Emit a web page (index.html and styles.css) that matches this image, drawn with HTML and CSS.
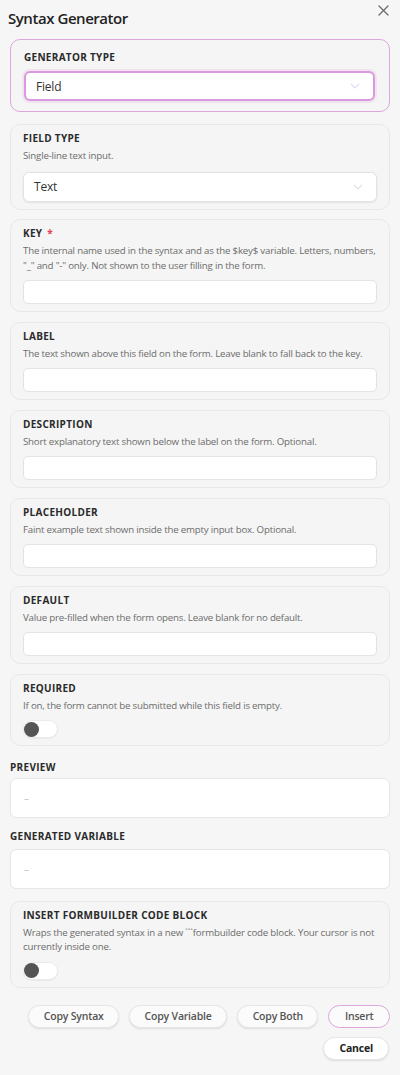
FILE: index.html
```html
<!DOCTYPE html>
<html lang="en">
<head>
<meta charset="utf-8">
<title>Syntax Generator</title>
<link rel="stylesheet" href="styles.css">
</head>
<body>
<div class="modal">
  <div class="header">
    <h1 class="title">Syntax Generator</h1>
    <button class="close" aria-label="Close">
      <svg width="11" height="11" viewBox="0 0 11 11"><path d="M1 1L10 10M10 1L1 10" stroke="#6b6b6b" stroke-width="1.3" fill="none" stroke-linecap="round"/></svg>
    </button>
  </div>

  <div class="card card-accent">
    <div class="card-title">GENERATOR TYPE</div>
    <div class="select select-accent">
      <span>Field</span>
      <svg class="chev" width="10" height="6" viewBox="0 0 10 6"><path d="M1 1l4 4 4-4" stroke="#e4daf0" stroke-width="1.1" fill="none"/></svg>
    </div>
  </div>

  <div class="card">
    <div class="card-title">FIELD TYPE</div>
    <div class="card-desc">Single-line text input.</div>
    <div class="select">
      <span>Text</span>
      <svg class="chev" width="10" height="6" viewBox="0 0 10 6"><path d="M1 1l4 4 4-4" stroke="#e0e0e0" stroke-width="1.1" fill="none"/></svg>
    </div>
  </div>

  <div class="card">
    <div class="card-title">KEY <span class="req">*</span></div>
    <div class="card-desc">The internal name used in the syntax and as the $key$ variable. Letters, numbers, "_" and "-" only. Not shown to the user filling in the form.</div>
    <div class="input"></div>
  </div>

  <div class="card">
    <div class="card-title">LABEL</div>
    <div class="card-desc">The text shown above this field on the form. Leave blank to fall back to the key.</div>
    <div class="input"></div>
  </div>

  <div class="card">
    <div class="card-title">DESCRIPTION</div>
    <div class="card-desc">Short explanatory text shown below the label on the form. Optional.</div>
    <div class="input"></div>
  </div>

  <div class="card">
    <div class="card-title">PLACEHOLDER</div>
    <div class="card-desc">Faint example text shown inside the empty input box. Optional.</div>
    <div class="input"></div>
  </div>

  <div class="card">
    <div class="card-title">DEFAULT</div>
    <div class="card-desc">Value pre-filled when the form opens. Leave blank for no default.</div>
    <div class="input"></div>
  </div>

  <div class="card">
    <div class="card-title">REQUIRED</div>
    <div class="card-desc">If on, the form cannot be submitted while this field is empty.</div>
    <div class="toggle"><span class="knob"></span></div>
  </div>

  <div class="section">
    <div class="section-title">PREVIEW</div>
    <div class="output">–</div>
  </div>

  <div class="section section-second">
    <div class="section-title">GENERATED VARIABLE</div>
    <div class="output">–</div>
  </div>

  <div class="card card-last">
    <div class="card-title">INSERT FORMBUILDER CODE BLOCK</div>
    <div class="card-desc">Wraps the generated syntax in a new ```formbuilder code block. Your cursor is not currently inside one.</div>
    <div class="toggle"><span class="knob"></span></div>
  </div>

  <div class="actions">
    <button class="btn">Copy Syntax</button>
    <button class="btn">Copy Variable</button>
    <button class="btn">Copy Both</button>
    <button class="btn btn-primary">Insert</button>
  </div>
  <div class="actions actions-second">
    <button class="btn btn-cancel">Cancel</button>
  </div>
</div>
</body>
</html>
```

FILE: styles.css
```css
* { box-sizing: border-box; }

html, body {
  margin: 0;
  padding: 0;
  background: #f6f6f6;
}

body {
  font-family: "Open Sans", "Noto Sans", sans-serif;
  color: #222;
}

.modal {
  padding: 0 10px 10px;
  display: flex;
  flex-direction: column;
}

.header {
  display: flex;
  justify-content: space-between;
  align-items: flex-start;
  height: 39px;
}

.title {
  margin: 7px 0 0 -2px;
  font-size: 15px;
  font-weight: 600;
  line-height: 22px;
  color: #222;
  letter-spacing: -0.45px;
}

.close {
  border: 0;
  background: none;
  padding: 0;
  margin: 5px 0 0 0;
  width: 12px;
  height: 12px;
  display: flex;
}

.card {
  border: 1px solid #e8e8e8;
  border-radius: 10px;
  background: #f5f5f5;
  padding: 6px 12px 7px;
  margin-bottom: 9.5px;
  display: flex;
  flex-direction: column;
}

.card-accent {
  border: 1.5px solid #dca5de;
  padding: 10px 14px 10px 13px;
  margin-bottom: 12px;
}

.card-title {
  font-size: 10px;
  font-weight: 700;
  letter-spacing: 0.3px;
  line-height: 15px;
  color: #2a2a2a;
}

.req {
  color: #e0405a;
  margin-left: 2px;
}

.card-desc {
  margin-top: 3px;
  font-size: 9.7px;
  line-height: 14.5px;
  color: #6c6c6c;
  letter-spacing: -0.2px;
}

.select {
  margin-top: 8px;
  height: 30px;
  background: #fff;
  border: 1px solid #e2e2e2;
  border-radius: 6px;
  box-shadow: 0 1px 2px rgba(0, 0, 0, 0.08);
  display: flex;
  align-items: center;
  justify-content: space-between;
  padding: 0 13px 0 10px;
  font-size: 12px;
  letter-spacing: -0.2px;
  color: #333;
}

.select-accent {
  margin-top: 6px;
  border: 2px solid #d999df;
  box-shadow: 0 0 0 2px rgba(217, 153, 223, 0.18);
  padding-left: 10px;
}

.chev { display: block; }

.input {
  margin-top: 7px;
  height: 24px;
  background: #fff;
  border: 1px solid #e4e4e4;
  border-radius: 5px;
}

.toggle {
  margin-top: 7px;
  width: 35px;
  height: 18px;
  border-radius: 9px;
  background: #fff;
  border: 1px solid #ebebeb;
  box-shadow: 0 1px 1px rgba(0, 0, 0, 0.05);
  position: relative;
}

.knob {
  position: absolute;
  left: 0;
  top: 0.5px;
  width: 15px;
  height: 15px;
  border-radius: 50%;
  background: #555;
}

.section {
  display: flex;
  flex-direction: column;
  margin-top: 4px;
}

.section-second {
  margin-top: 11px;
}

.section-title {
  font-size: 10px;
  font-weight: 700;
  letter-spacing: 0.3px;
  line-height: 15px;
  color: #2a2a2a;
  margin-bottom: 3px;
}

.section-second .section-title {
  margin-bottom: 5px;
}

.output {
  height: 40px;
  background: #fff;
  border: 1px solid #e6e6e6;
  border-radius: 6px;
  padding: 0 13px;
  display: flex;
  align-items: center;
  font-size: 10px;
  color: #c4c4c4;
}

.card-last {
  margin-top: 12px;
  margin-bottom: 0;
}

.actions {
  display: flex;
  justify-content: flex-end;
  gap: 10px;
  margin-top: 17px;
}

.actions-second {
  margin-top: 9px;
}

.btn {
  height: 23px;
  border-radius: 12px;
  border: 1px solid #e6e6e6;
  background: #fbfbfb;
  box-shadow: 0 1px 2px rgba(0, 0, 0, 0.1);
  font-family: "Open Sans", "Noto Sans", sans-serif;
  font-size: 10.5px;
  font-weight: 600;
  letter-spacing: -0.2px;
  color: #555;
  padding: 0 14.5px;
  line-height: 20px;
}

.btn-primary {
  border: 1px solid #dca5de;
  padding: 0 15.5px;
  box-shadow: none;
}

.btn-cancel {
  padding: 0 15px;
  background: #fff;
  color: #222;
  font-weight: 700;
  margin-right: 1px;
}
```
